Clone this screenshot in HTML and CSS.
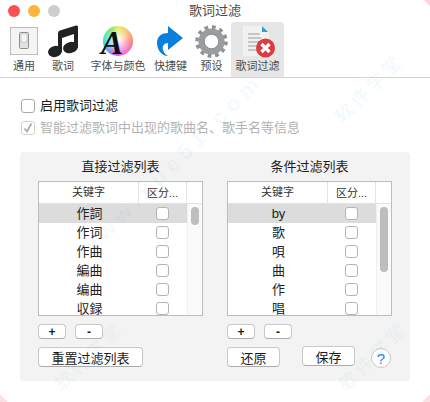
FILE: index.html
```html
<!DOCTYPE html>
<html lang="zh-CN">
<head>
    <meta charset="UTF-8">
    <title>歌词过滤</title>
    <link rel="stylesheet" href="styles.css">
</head>
<body>
    <div class="window">
        <div class="titlebar">
            <div class="lights">
                <span class="light red"></span>
                <span class="light yellow"></span>
                <span class="light grey"></span>
            </div>
            <div class="title">歌词过滤</div>
        </div>

        <div class="toolbar">
            <div class="tool tool-general">
                <svg width="28" height="28" viewBox="0 0 28 28">
                    <rect x="0.5" y="0.5" width="27" height="27" fill="#f4f4f4" stroke="#bdbdbd"/>
                    <rect x="9.5" y="5.5" width="9" height="16" rx="1" fill="#e2e2e2" stroke="#8f8f8f"/>
                    <rect x="11" y="7" width="6" height="8" fill="#f5f5f5" stroke="#b5b5b5" stroke-width="0.6"/>
                </svg>
                <span>通用</span>
            </div>
            <div class="tool tool-lyric">
                <svg width="30" height="33" viewBox="0 0 30 33">
                    <path d="M10 8 Q10 6 12 5.5 L28 0.5 Q30 0 30 2 V23 H26 V9 L14 13 V27 H10 Z" fill="#222"/>
                    <ellipse cx="7" cy="26.5" rx="7" ry="5.5" fill="#222" transform="rotate(-15 7 26.5)"/>
                    <ellipse cx="22.5" cy="22.5" rx="7.5" ry="5.5" fill="#222" transform="rotate(-15 22.5 22.5)"/>
                </svg>
                <span>歌词</span>
            </div>
            <div class="tool tool-font">
                <div class="wheel"><i>A</i></div>
                <span>字体与颜色</span>
            </div>
            <div class="tool tool-key">
                <svg width="27" height="31" viewBox="0 0 27 31">
                    <path d="M11 0 L26 12 L11 24 V17 C7 17 5 20 6 24 C7 27 9 29 11 30 C5 30 0 24 0 17 C0 10 5 7 11 7 Z" fill="#0a7fdc"/>
                </svg>
                <span>快捷键</span>
            </div>
            <div class="tool tool-preset">
                <svg width="33" height="33" viewBox="0 0 34 34">
                    <circle cx="17" cy="17" r="14.5" fill="none" stroke="#8f9295" stroke-width="4.5" stroke-dasharray="3.8 3.79"/>
                    <circle cx="17" cy="17" r="10.5" fill="none" stroke="#9a9da0" stroke-width="6"/>
                    <circle cx="17" cy="17" r="7.5" fill="#fff" stroke="#7f8285" stroke-width="1"/>
                </svg>
                <span>预设</span>
            </div>
            <div class="tool tool-filter">
                <svg width="34" height="34" viewBox="0 0 34 34">
                    <path d="M2 1 H21 L28 8 V31 H2 Z" fill="#f1f1f1"/>
                    <path d="M21 1 L27 7 H21 Z" fill="#2f9fd8"/>
                    <path d="M7 9 H19 M7 13 H20 M7 17 H20 M7 21 H20 M7 25 H20" stroke="#9b9b9b" stroke-width="1.2"/>
                    <circle cx="24.5" cy="23" r="9.5" fill="#dd3b40"/>
                    <path d="M20.5 19 L28.5 27 M28.5 19 L20.5 27" stroke="#fff" stroke-width="3.2"/>
                </svg>
                <span>歌词过滤</span>
            </div>
        </div>

        <div class="content">
            <label class="option">
                <span class="box"></span>
                <span>启用歌词过滤</span>
            </label>
            <label class="option disabled">
                <span class="box">
                    <svg width="14" height="14" viewBox="0 0 14 14"><path d="M3.5 7.5 L6 10.5 L10.5 2.5" fill="none" stroke="#a8a8a8" stroke-width="1.6"/></svg>
                </span>
                <span class="clip">智能过滤歌词中出现的歌曲名、歌手名等信息</span>
            </label>

            <div class="panel">
                <div class="column">
                    <h3>直接过滤列表</h3>
                    <div class="list">
                        <div class="list-head">
                            <div class="col-key">关键字</div>
                            <div class="col-case">区分...</div>
                            <div class="col-end"></div>
                        </div>
                        <div class="list-body">
                            <div class="rows">
                                <div class="row selected"><div class="col-key">作詞</div><div class="col-case"><span class="tick"></span></div></div>
                                <div class="row"><div class="col-key">作词</div><div class="col-case"><span class="tick"></span></div></div>
                                <div class="row"><div class="col-key">作曲</div><div class="col-case"><span class="tick"></span></div></div>
                                <div class="row"><div class="col-key">編曲</div><div class="col-case"><span class="tick"></span></div></div>
                                <div class="row"><div class="col-key">编曲</div><div class="col-case"><span class="tick"></span></div></div>
                                <div class="row"><div class="col-key">収録</div><div class="col-case"><span class="tick"></span></div></div>
                            </div>
                            <div class="scrollbar"><div class="thumb thumb-short"></div></div>
                        </div>
                    </div>
                    <div class="small-buttons">
                        <button class="btn small">+</button>
                        <button class="btn small">-</button>
                    </div>
                    <div class="big-buttons">
                        <button class="btn reset">重置过滤列表</button>
                    </div>
                </div>

                <div class="column">
                    <h3>条件过滤列表</h3>
                    <div class="list">
                        <div class="list-head">
                            <div class="col-key">关键字</div>
                            <div class="col-case">区分...</div>
                            <div class="col-end"></div>
                        </div>
                        <div class="list-body">
                            <div class="rows">
                                <div class="row selected"><div class="col-key">by</div><div class="col-case"><span class="tick"></span></div></div>
                                <div class="row"><div class="col-key">歌</div><div class="col-case"><span class="tick"></span></div></div>
                                <div class="row"><div class="col-key">唄</div><div class="col-case"><span class="tick"></span></div></div>
                                <div class="row"><div class="col-key">曲</div><div class="col-case"><span class="tick"></span></div></div>
                                <div class="row"><div class="col-key">作</div><div class="col-case"><span class="tick"></span></div></div>
                                <div class="row"><div class="col-key">唱</div><div class="col-case"><span class="tick"></span></div></div>
                            </div>
                            <div class="scrollbar"><div class="thumb thumb-long"></div></div>
                        </div>
                    </div>
                    <div class="small-buttons">
                        <button class="btn small">+</button>
                        <button class="btn small">-</button>
                    </div>
                    <div class="big-buttons">
                        <button class="btn action">还原</button>
                        <button class="btn action save">保存</button>
                        <button class="help">?</button>
                    </div>
                </div>
            </div>
        </div>

        <!-- watermark over the whole window -->
        <div class="watermark">
            <span class="mark mark-a">软件学堂</span>
            <span class="mark mark-b">软件学堂</span>
            <span class="mark mark-c">软件学堂</span>
            <span class="mark mark-d">www.xue51.com</span>
        </div>
    </div>
</body>
</html>
```

FILE: styles.css
```css
* {
    margin: 0;
    padding: 0;
    box-sizing: border-box;
    font-family: "Liberation Sans", "Noto Sans CJK SC", sans-serif;
}

body {
    width: 430px;
    height: 402px;
    overflow: hidden;
    background: #fff;
    color: #1c1c1c;
}

.window {
    height: 402px;
    position: relative;
    overflow: hidden;
}

.titlebar {
    height: 22px;
    display: flex;
    align-items: center;
    padding-left: 8px;
    position: relative;
}

.lights {
    display: flex;
    gap: 8px;
}

.light {
    width: 12px;
    height: 12px;
    border-radius: 50%;
}

.red { background: #fc4f52; }
.yellow { background: #fdb43a; }
.grey { background: #cdcdcd; }

.title {
    position: absolute;
    left: 0;
    right: 0;
    top: 3px;
    text-align: center;
    font-size: 13px;
    line-height: 16px;
    color: #4a4a4a;
}

.toolbar {
    height: 56px;
    display: flex;
    border-bottom: 1px solid #d4d4d4;
    padding-left: 8px;
}

.tool {
    display: flex;
    flex-direction: column;
    align-items: center;
    font-size: 11px;
    color: #4d4d4d;
    height: 55px;
}

.tool svg,
.wheel {
    flex: none;
}

.tool span {
    position: absolute;
    top: 59px;
    line-height: 14px;
    white-space: nowrap;
}

.tool-general { width: 28px; margin-left: 2px; padding-top: 5px; }
.tool-lyric { width: 30px; margin-left: 10px; padding-top: 3px; }
.tool-font { width: 30px; margin-left: 25px; padding-top: 4px; }
.tool-key { width: 27px; margin-left: 24px; padding-top: 4px; }
.tool-preset { width: 33px; margin-left: 11px; padding-top: 3px; }
.tool-filter { width: 53px; margin-left: 3px; padding-top: 3px; background: #e6e6e6; border-radius: 4px 4px 0 0; }

.wheel {
    width: 30px;
    height: 30px;
    border-radius: 50%;
    background:
        radial-gradient(circle, #fff 0%, rgba(255, 255, 255, 0) 72%),
        conic-gradient(#e2ee5a 0deg, #fbb45a 50deg, #f96a80 100deg, #ee5ae0 160deg, #a05af0 205deg, #35c8f0 250deg, #35e8c0 290deg, #7fe05a 330deg, #e2ee5a 360deg);
    display: flex;
}

.wheel i {
    font-family: "Liberation Serif", serif;
    font-size: 33px;
    line-height: 30px;
    height: 30px;
    margin: 2px 0 0 -2px;
    font-weight: bold;
    color: #111;
}

.content {
    padding: 20px 20px 0;
}

.option {
    display: flex;
    align-items: center;
    gap: 5px;
    height: 16px;
    margin-left: 1px;
    margin-bottom: 6px;
    font-size: 13px;
    line-height: 16px;
}

.option.disabled {
    color: #b3b3b3;
    margin-bottom: 0;
}

.clip {
    width: 259px;
    overflow: hidden;
    white-space: nowrap;
}

.box {
    flex: none;
    width: 14px;
    height: 14px;
    background: #fff;
    border: 1px solid #a9a9a9;
    border-radius: 3px;
    display: flex;
}

.disabled .box {
    border-color: #d2d2d2;
}

.box svg {
    margin: -1px;
}

.panel {
    margin-top: 16px;
    height: 229px;
    background: #f3f3f3;
    border-radius: 4px;
    display: flex;
    gap: 24px;
    padding: 0 18px;
}

.column {
    width: 165px;
}

h3 {
    font-size: 13px;
    font-weight: normal;
    text-align: center;
    line-height: 29px;
    height: 29px;
}

.list {
    height: 135px;
    background: #fff;
    border: 1px solid #bdbdbd;
    overflow: hidden;
}

.list-head {
    display: flex;
    height: 22px;
    border-bottom: 1px solid #e2e2e2;
    font-size: 11px;
    line-height: 20px;
    color: #333;
}

.col-key {
    width: 99px;
    flex: none;
    text-align: center;
}

.col-case {
    width: 49px;
    flex: none;
    text-align: center;
    display: flex;
    justify-content: center;
    align-items: center;
}

.list-head .col-case,
.list-head .col-end {
    border-left: 1px solid #e4e4e4;
}

.list-head .col-case {
    width: 48px;
}

.col-end {
    flex: 1;
}

.list-body {
    display: flex;
}

.rows {
    width: 148px;
    flex: none;
}

.row {
    display: flex;
    height: 19px;
    font-size: 13px;
    line-height: 19px;
    color: #222;
}

.row .col-key {
    padding: 0 10px 0 12px;
}

.row.selected {
    background: #dcdcdc;
}

.tick {
    width: 13px;
    height: 13px;
    background: #fff;
    border: 1px solid #b4b4b4;
    border-radius: 3px;
}

.scrollbar {
    flex: 1;
    height: 114px;
    background: #fafafa;
    border-left: 1px solid #efefef;
    padding: 3px 0 0 3px;
}

.thumb {
    width: 8px;
    background: #bdbdbd;
    border-radius: 4px;
}

.thumb-short { height: 18px; }
.thumb-long { height: 65px; }

.btn {
    background: #fff;
    border: 1px solid #c8c8c8;
    border-bottom-color: #ababab;
    border-radius: 4px;
    color: #1c1c1c;
    font-size: 13px;
}

.small-buttons {
    display: flex;
    gap: 9px;
    margin-top: 8px;
}

.small {
    width: 28px;
    height: 15px;
    line-height: 12px;
    font-weight: bold;
    font-size: 12px;
}

.big-buttons {
    display: flex;
    align-items: flex-start;
    margin-top: 8px;
}

.reset {
    width: 105px;
    height: 20px;
}

.action {
    width: 53px;
    height: 20px;
}

.save {
    margin-left: 22px;
    margin-top: -1px;
}

.help {
    width: 20px;
    height: 20px;
    margin-left: 16px;
    margin-top: 1px;
    border-radius: 50%;
    background: #fff;
    border: 1px solid #c8c8c8;
    color: #1a84f0;
    font-size: 15px;
    line-height: 17px;
}

.watermark {
    position: absolute;
    inset: 0;
    pointer-events: none;
    background:
        linear-gradient(225deg, #fbd5dc 4px, transparent 5px),
        linear-gradient(45deg, #fbdfe4 5px, transparent 6px),
        linear-gradient(315deg, #fbdfe4 5px, transparent 6px);
}

.mark {
    position: absolute;
    white-space: nowrap;
    color: rgba(90, 170, 225, 0.07);
    font-weight: bold;
    transform: translate(-50%, -50%) rotate(-45deg);
}

.mark-a,
.mark-b,
.mark-c {
    font-size: 18px;
    letter-spacing: 4px;
}

.mark-d {
    font-size: 22px;
    letter-spacing: 6px;
}

.mark-a { left: 88px; top: 355px; }
.mark-b { left: 372px; top: 355px; }
.mark-c { left: 368px; top: 87px; }
.mark-d { left: 172px; top: 165px; }
```
